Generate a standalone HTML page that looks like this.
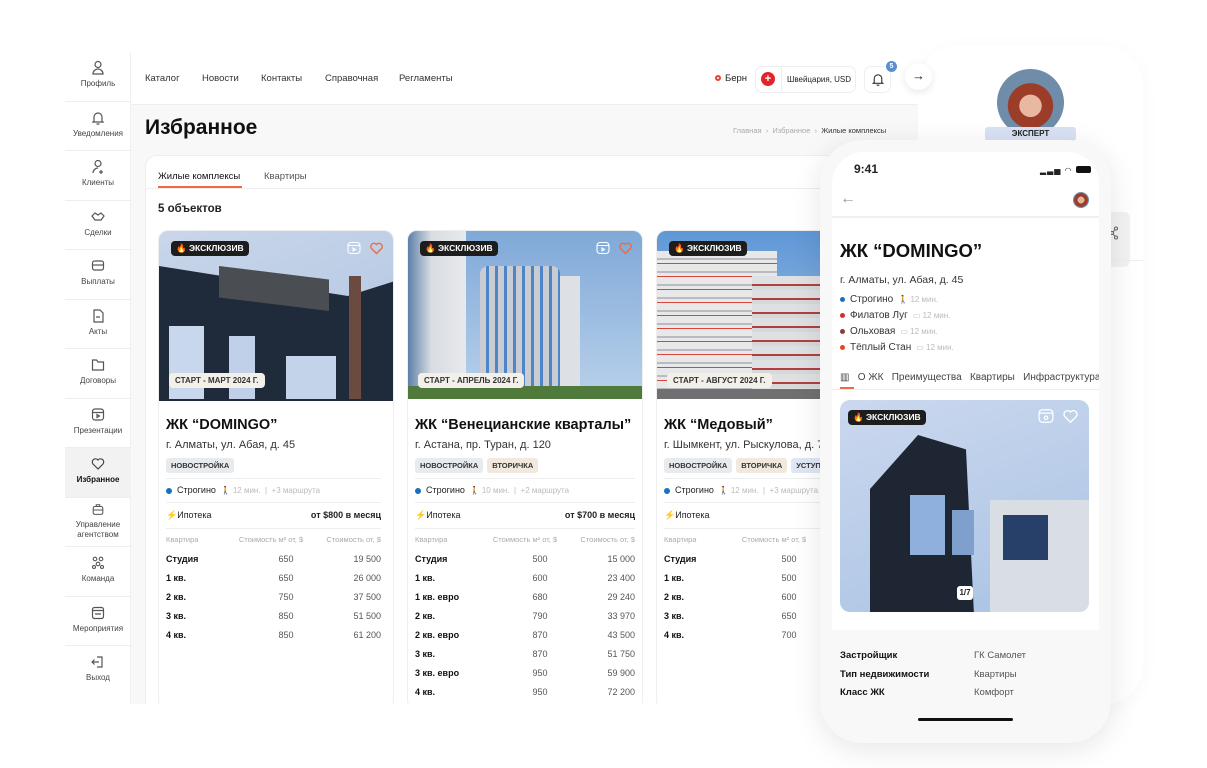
<!DOCTYPE html>
<html><head><meta charset="utf-8"><style>
*{margin:0;padding:0;box-sizing:border-box}
body{width:1207px;height:768px;background:#fff;font-family:"Liberation Sans",sans-serif;color:#222;position:relative;overflow:hidden}
.a{position:absolute}
.sb{left:65px;width:66px;text-align:center;font-size:8px;color:#444;border-bottom:1px solid #eee;height:49.5px}
.sb svg{display:block;margin:0 auto 3px;}
.nav{font-size:9.5px;color:#333}
.card{background:#fff;border:1px solid #eee;border-radius:10px;overflow:hidden}
.img{position:absolute;left:0;top:0;right:0;height:168px}
.badge{position:absolute;left:12px;top:10px;background:#1d1d1d;color:#fff;font-size:8.5px;font-weight:bold;padding:2px 5px;border-radius:4px}
.start{position:absolute;left:10px;top:142px;background:#f3efe9;color:#333;font-size:8px;font-weight:bold;padding:3px 6px;border-radius:4px}
.t{font-size:14.5px;font-weight:bold;color:#111;white-space:nowrap}
.ad{font-size:11px;color:#333}
.tag{display:inline-block;font-size:7.5px;font-weight:bold;background:#e8ebee;padding:3px 5px;border-radius:3px;margin-right:4px;color:#333}
.hr{height:1px;background:#eee}
.row{display:flex;font-size:9px;height:19px;align-items:center}
.row span:first-child{flex:1;font-weight:bold;color:#111}
.row span:nth-child(2){width:70px;text-align:center;color:#555}
.row span:nth-child(3){width:60px;text-align:right;color:#555}
.hd span{font-weight:normal!important;color:#aaa!important;font-size:7.5px}
.dot{display:inline-block;width:6px;height:6px;border-radius:50%;margin-right:5px;vertical-align:middle}
</style></head><body>

<!-- right panel (behind) -->
<div class="a" style="left:918px;top:45px;width:225px;height:660px;background:#fff;border-radius:40px;box-shadow:0 4px 20px rgba(0,0,0,.03)"></div>
<div class="a" style="left:1100px;top:212px;width:30px;height:55px;background:#f2f2f2;border-radius:6px"></div>
<svg class="a" style="left:1109px;top:226px" width="10" height="14" viewBox="0 0 10 14" fill="none" stroke="#666" stroke-width="1"><circle cx="7" cy="2.5" r="1.5"/><circle cx="3" cy="7" r="1.5"/><circle cx="7" cy="11.5" r="1.5"/><path d="M4.2 6l1.8-2.5 M4.2 8l1.8 2.5"/></svg>
<div class="a" style="left:1100px;top:260px;width:43px;height:1px;background:#eee"></div>
<div class="a" style="left:997px;top:69px;width:67px;height:67px;border-radius:50%;background:radial-gradient(circle at 50% 55%,#e8b8a0 0 22%,#9c3d2a 23% 45%,#6f8ca8 46%)"></div>
<div class="a" style="left:985px;top:127px;width:91px;height:14px;background:#d8e2f4;border-radius:3px;font-size:8px;text-align:center;font-weight:bold;line-height:13px;color:#222">ЭКСПЕРТ</div>

<!-- sidebar -->
<div class="a" style="left:65px;top:52px;width:66px;height:652px;background:#fff;border-right:1px solid #f0f0f0"></div>
<div class="a sb" style="top:52px"><svg width="14" height="16" viewBox="0 0 14 16" fill="none" stroke="#555" stroke-width="1.2" style="margin-top:8px"><circle cx="7" cy="4.5" r="3"/><path d="M2 14c0-3 2.5-5 5-5s5 2 5 5z"/></svg>Профиль</div>
<div class="a sb" style="top:101.5px"><svg width="14" height="16" viewBox="0 0 14 16" fill="none" stroke="#555" stroke-width="1.2" style="margin-top:8px"><path d="M3 11V7a4 4 0 018 0v4l1 1H2z M5.5 14h3"/></svg>Уведомления</div>
<div class="a sb" style="top:151px"><svg width="14" height="16" viewBox="0 0 14 16" fill="none" stroke="#555" stroke-width="1.2" style="margin-top:8px"><circle cx="7" cy="4.5" r="3"/><path d="M2 14c0-3 2.5-5 5-5 M10 11v4 M8 13h4"/></svg>Клиенты</div>
<div class="a sb" style="top:200.5px"><svg width="14" height="16" viewBox="0 0 14 16" fill="none" stroke="#555" stroke-width="1.2" style="margin-top:8px"><path d="M1 7l3-3 3 2 3-2 3 3-3 4H4z"/></svg>Сделки</div>
<div class="a sb" style="top:250px"><svg width="14" height="16" viewBox="0 0 14 16" fill="none" stroke="#555" stroke-width="1.2" style="margin-top:8px"><rect x="1.5" y="3" width="11" height="9" rx="2"/><path d="M1.5 7h11"/></svg>Выплаты</div>
<div class="a sb" style="top:299.5px"><svg width="14" height="16" viewBox="0 0 14 16" fill="none" stroke="#555" stroke-width="1.2" style="margin-top:8px"><path d="M3 2h6l3 3v9H3z M5 9h4"/></svg>Акты</div>
<div class="a sb" style="top:349px"><svg width="14" height="16" viewBox="0 0 14 16" fill="none" stroke="#555" stroke-width="1.2" style="margin-top:8px"><path d="M1.5 3h4l1.5 2h5.5v8h-11z"/></svg>Договоры</div>
<div class="a sb" style="top:398.5px"><svg width="14" height="16" viewBox="0 0 14 16" fill="none" stroke="#555" stroke-width="1.2" style="margin-top:8px"><rect x="1.5" y="2" width="11" height="11" rx="2.5"/><path d="M1.5 5.5h11 M6 7.5v3l2.5-1.5z"/></svg>Презентации</div>
<div class="a sb" style="top:448px;background:#f2f2f2;color:#111;font-weight:bold"><svg width="14" height="16" viewBox="0 0 14 16" fill="none" stroke="#444" stroke-width="1.2" style="margin-top:8px"><path d="M7 13L2 8a3 3 0 015-4 3 3 0 015 4z"/></svg>Избранное</div>
<div class="a sb" style="top:497.5px;line-height:10px"><svg width="14" height="14" viewBox="0 0 14 16" fill="none" stroke="#555" stroke-width="1.2" style="margin-top:5px"><rect x="1.5" y="4" width="11" height="9" rx="2"/><path d="M5 4V2h4v2 M1.5 8h11"/></svg>Управление агентством</div>
<div class="a sb" style="top:547px"><svg width="14" height="16" viewBox="0 0 14 16" fill="none" stroke="#555" stroke-width="1.1" style="margin-top:8px"><circle cx="4" cy="4" r="1.8"/><circle cx="10" cy="4" r="1.8"/><circle cx="7" cy="9" r="1.8"/><circle cx="3" cy="12" r="1.5"/><circle cx="11" cy="12" r="1.5"/></svg>Команда</div>
<div class="a sb" style="top:596.5px"><svg width="14" height="16" viewBox="0 0 14 16" fill="none" stroke="#555" stroke-width="1.2" style="margin-top:8px"><rect x="1.5" y="2.5" width="11" height="11" rx="2"/><path d="M1.5 5.5h11 M4 9h6"/></svg>Мероприятия</div>
<div class="a sb" style="top:646px;border:none"><svg width="14" height="16" viewBox="0 0 14 16" fill="none" stroke="#555" stroke-width="1.2" style="margin-top:8px"><path d="M6 3h5v10H6 M1 8h7 M3.5 5.5L1 8l2.5 2.5"/></svg>Выход</div>

<!-- main bg -->
<div class="a" style="left:131px;top:105px;width:787px;height:600px;background:#f8f8f8"></div>
<div class="a" style="left:131px;top:52px;width:787px;height:53px;background:#fff;border-bottom:1px solid #eee"></div>
<div class="a nav" style="left:145px;top:73px">Каталог</div>
<div class="a nav" style="left:202px;top:73px">Новости</div>
<div class="a nav" style="left:261px;top:73px">Контакты</div>
<div class="a nav" style="left:325px;top:73px">Справочная</div>
<div class="a nav" style="left:399px;top:73px">Регламенты</div>
<div class="a" style="left:715px;top:75px;width:6px;height:6px;border-radius:50%;border:2px solid #e8452c"></div>
<div class="a" style="left:725px;top:73px;font-size:9.5px">Берн</div>
<div class="a" style="left:755px;top:66px;width:101px;height:27px;border:1px solid #eee;border-radius:7px"></div>
<div class="a" style="left:781px;top:66px;width:1px;height:27px;background:#eee"></div>
<div class="a" style="left:761px;top:72px;width:14px;height:14px;border-radius:50%;background:#e2242b;color:#fff;font-size:11px;font-weight:bold;line-height:14px;text-align:center">+</div>
<div class="a" style="left:787px;top:75px;font-size:8px">Швейцария, USD</div>
<div class="a" style="left:864px;top:66px;width:27px;height:27px;border:1px solid #eee;border-radius:7px"></div>
<svg class="a" style="left:871px;top:72px" width="14" height="15" viewBox="0 0 14 16" fill="none" stroke="#333" stroke-width="1.2"><path d="M3 11V7a4 4 0 018 0v4l1 1H2z M5.5 14h3"/></svg>
<div class="a" style="left:886px;top:61px;width:11px;height:11px;border-radius:50%;background:#5b8fd0;color:#fff;font-size:7px;line-height:11px;text-align:center;font-weight:bold">5</div>
<div class="a" style="left:905px;top:63px;width:27px;height:27px;border-radius:50%;background:#fff;box-shadow:0 2px 8px rgba(0,0,0,.1);text-align:center;line-height:26px;font-size:13px">→</div>

<div class="a" style="left:145px;top:116px;font-size:21px;font-weight:bold;color:#111">Избранное</div>
<div class="a" style="left:733px;top:126px;font-size:7.5px;color:#aaa">Главная &nbsp;›&nbsp; Избранное &nbsp;›&nbsp; <span style="color:#333">Жилые комплексы</span></div>

<div class="a" style="left:145px;top:155px;width:773px;height:550px;background:#fff;border-radius:12px 0 0 0;border:1px solid #eee"></div>
<div class="a" style="left:158px;top:171px;font-size:9.5px;color:#111">Жилые комплексы</div>
<div class="a" style="left:158px;top:186px;width:84px;height:2px;background:#ee6a45"></div>
<div class="a" style="left:264px;top:171px;font-size:9.5px;color:#555">Квартиры</div>
<div class="a" style="left:146px;top:188px;width:772px;height:1px;background:#eee"></div>
<div class="a" style="left:158px;top:203px;font-size:11.5px;font-weight:bold">5 объектов</div>

<!-- card 1 -->
<div class="a card" style="left:158px;top:230px;width:236px;height:480px">
 <div class="img" style="background:linear-gradient(160deg,#c9d6ea,#aec4e0)">
  <div class="a" style="left:0;top:20px;width:236px;height:150px;background:#1f2a3a;clip-path:polygon(0 10%,80% 30%,100% 20%,100% 100%,0 100%)"></div>
  <div class="a" style="left:60px;top:35px;width:110px;height:45px;background:#4a4e52;clip-path:polygon(0 0,100% 30%,100% 100%,0 70%)"></div>
  <div class="a" style="left:10px;top:95px;width:35px;height:73px;background:#c9d7ec"></div>
  <div class="a" style="left:70px;top:105px;width:26px;height:63px;background:#c0d0e8"></div>
  <div class="a" style="left:127px;top:125px;width:50px;height:43px;background:#c3d3ea"></div>
  <div class="a" style="left:190px;top:45px;width:12px;height:123px;background:#6b4a3f"></div>
 </div>
 <div class="badge">🔥 ЭКСКЛЮЗИВ</div>
 <svg class="a" style="left:188px;top:10px" width="14" height="14" viewBox="0 0 14 14" fill="none" stroke="#fff" stroke-width="1.1"><rect x="1" y="1.5" width="12" height="11" rx="3"/><path d="M1 4.5h12 M6 7v3l2.5-1.5z"/></svg>
 <svg class="a" style="left:210px;top:10px" width="15" height="14" viewBox="0 0 14 14" fill="none" stroke="#ee6a45" stroke-width="1.4"><path d="M7 12.5L2 7.5a3 3 0 015-4 3 3 0 015 4z"/></svg>
 <div class="start">СТАРТ - МАРТ 2024 Г.</div>
 <div class="a" style="left:7px;top:186px;right:12px">
  <div class="t">ЖК “DOMINGO”</div>
  <div class="ad" style="margin-top:6px">г. Алматы, ул. Абая, д. 45</div>
  <div style="margin-top:4px"><span class="tag">НОВОСТРОЙКА</span></div>
  <div class="hr" style="margin-top:5px"></div>
  <div style="font-size:9px;height:23px;line-height:23px"><span class="dot" style="background:#1a6fc0"></span>Строгино <span style="color:#bbb;font-size:8px">&nbsp;🚶 12 мин. &nbsp;|&nbsp; +3 маршрута</span></div>
  <div class="hr"></div>
  <div style="font-size:9px;height:25px;line-height:25px;display:flex;justify-content:space-between"><span><span style="color:#f5a623">⚡</span>Ипотека</span><b style="font-weight:bold">от $800 в месяц</b></div>
  <div class="hr"></div>
  <div class="row hd" style="margin-top:1px"><span>Квартира</span><span style="width:80px">Стоимость м² от, $</span><span style="width:70px">Стоимость от, $</span></div>
  <div class="row"><span>Студия</span><span>650</span><span>19 500</span></div>
  <div class="row"><span>1 кв.</span><span>650</span><span>26 000</span></div>
  <div class="row"><span>2 кв.</span><span>750</span><span>37 500</span></div>
  <div class="row"><span>3 кв.</span><span>850</span><span>51 500</span></div>
  <div class="row"><span>4 кв.</span><span>850</span><span>61 200</span></div>
 </div>
</div>

<!-- card 2 -->
<div class="a card" style="left:407px;top:230px;width:236px;height:480px">
 <div class="img" style="background:linear-gradient(180deg,#7fa9d8,#b9d1ea)">
  <div class="a" style="left:0;top:0;width:58px;height:168px;background:linear-gradient(90deg,#5d7fa8,#d8dde3 40%,#e7e9ec)"></div>
  <div class="a" style="left:72px;top:35px;width:80px;height:133px;background:repeating-linear-gradient(90deg,#c9ccd2 0 6px,#4d86c6 6px 9px);border-radius:8px 8px 0 0"></div>
  <div class="a" style="left:152px;top:45px;width:20px;height:123px;background:#dde1e6"></div>
  <div class="a" style="left:0;top:155px;width:236px;height:13px;background:#4f7a3c"></div>
 </div>
 <div class="badge">🔥 ЭКСКЛЮЗИВ</div>
 <svg class="a" style="left:188px;top:10px" width="14" height="14" viewBox="0 0 14 14" fill="none" stroke="#fff" stroke-width="1.1"><rect x="1" y="1.5" width="12" height="11" rx="3"/><path d="M1 4.5h12 M6 7v3l2.5-1.5z"/></svg>
 <svg class="a" style="left:210px;top:10px" width="15" height="14" viewBox="0 0 14 14" fill="none" stroke="#ee6a45" stroke-width="1.4"><path d="M7 12.5L2 7.5a3 3 0 015-4 3 3 0 015 4z"/></svg>
 <div class="start">СТАРТ - АПРЕЛЬ 2024 Г.</div>
 <div class="a" style="left:7px;top:186px;right:7px">
  <div class="t">ЖК “Венецианские кварталы”</div>
  <div class="ad" style="margin-top:6px">г. Астана, пр. Туран, д. 120</div>
  <div style="margin-top:4px"><span class="tag">НОВОСТРОЙКА</span><span class="tag" style="background:#f1e8de">ВТОРИЧКА</span></div>
  <div class="hr" style="margin-top:5px"></div>
  <div style="font-size:9px;height:23px;line-height:23px"><span class="dot" style="background:#1a6fc0"></span>Строгино <span style="color:#bbb;font-size:8px">&nbsp;🚶 10 мин. &nbsp;|&nbsp; +2 маршрута</span></div>
  <div class="hr"></div>
  <div style="font-size:9px;height:25px;line-height:25px;display:flex;justify-content:space-between"><span><span style="color:#f5a623">⚡</span>Ипотека</span><b>от $700 в месяц</b></div>
  <div class="hr"></div>
  <div class="row hd" style="margin-top:1px"><span>Квартира</span><span style="width:80px">Стоимость м² от, $</span><span style="width:70px">Стоимость от, $</span></div>
  <div class="row"><span>Студия</span><span>500</span><span>15 000</span></div>
  <div class="row"><span>1 кв.</span><span>600</span><span>23 400</span></div>
  <div class="row"><span>1 кв. евро</span><span>680</span><span>29 240</span></div>
  <div class="row"><span>2 кв.</span><span>790</span><span>33 970</span></div>
  <div class="row"><span>2 кв. евро</span><span>870</span><span>43 500</span></div>
  <div class="row"><span>3 кв.</span><span>870</span><span>51 750</span></div>
  <div class="row"><span>3 кв. евро</span><span>950</span><span>59 900</span></div>
  <div class="row"><span>4 кв.</span><span>950</span><span>72 200</span></div>
 </div>
</div>

<!-- card 3 -->
<div class="a card" style="left:656px;top:230px;width:236px;height:480px">
 <div class="img" style="background:linear-gradient(180deg,#5f97d6,#a9c9ea)">
  <div class="a" style="left:0;top:20px;width:120px;height:148px;background:repeating-linear-gradient(180deg,#e8e8e8 0 7px,#b8bcc2 7px 9px,#e8e8e8 9px 12px,#d8453d 12px 13px)"></div>
  <div class="a" style="left:95px;top:45px;width:70px;height:123px;background:repeating-linear-gradient(180deg,#dfe0e2 0 8px,#b04040 8px 10px,#d6d8da 10px 14px)"></div>
  <div class="a" style="left:0;top:158px;width:236px;height:10px;background:#707070"></div>
 </div>
 <div class="badge">🔥 ЭКСКЛЮЗИВ</div>
 <div class="start">СТАРТ - АВГУСТ 2024 Г.</div>
 <div class="a" style="left:7px;top:186px;right:7px">
  <div class="t">ЖК “Медовый”</div>
  <div class="ad" style="margin-top:6px;white-space:nowrap">г. Шымкент, ул. Рыскулова, д. 78</div>
  <div style="margin-top:4px;white-space:nowrap"><span class="tag">НОВОСТРОЙКА</span><span class="tag" style="background:#f1e8de">ВТОРИЧКА</span><span class="tag" style="background:#dfe6f6">УСТУПКА</span></div>
  <div class="hr" style="margin-top:5px"></div>
  <div style="font-size:9px;height:23px;line-height:23px;white-space:nowrap"><span class="dot" style="background:#1a6fc0"></span>Строгино <span style="color:#bbb;font-size:8px">&nbsp;🚶 12 мин. &nbsp;|&nbsp; +3 маршрута</span></div>
  <div class="hr"></div>
  <div style="font-size:9px;height:25px;line-height:25px"><span style="color:#f5a623">⚡</span>Ипотека</div>
  <div class="hr"></div>
  <div class="row hd" style="margin-top:1px"><span>Квартира</span><span style="width:80px">Стоимость м² от, $</span><span style="width:70px">Стоимость от, $</span></div>
  <div class="row"><span>Студия</span><span>500</span><span></span></div>
  <div class="row"><span>1 кв.</span><span>500</span><span></span></div>
  <div class="row"><span>2 кв.</span><span>600</span><span></span></div>
  <div class="row"><span>3 кв.</span><span>650</span><span></span></div>
  <div class="row"><span>4 кв.</span><span>700</span><span></span></div>
 </div>
</div>

<!-- white cover bottom -->
<div class="a" style="left:131px;top:704px;width:800px;height:64px;background:#fff"></div>

<!-- phone -->
<div class="a" style="left:820px;top:140px;width:291px;height:603px;background:#f8f8f8;border-radius:42px;box-shadow:0 6px 30px rgba(0,0,0,.1)"></div>
<div class="a" style="left:832px;top:152px;width:267px;height:579px;background:#fff;border-radius:32px;overflow:hidden">
 <div class="a" style="left:22px;top:10px;font-size:12px;font-weight:bold">9:41</div>
 <div class="a" style="left:208px;top:14px;font-size:8px;letter-spacing:1px">▂▃▅ ◠ <span style="display:inline-block;width:15px;height:7px;background:#111;border-radius:2px"></span></div>
 <div class="a" style="left:8px;top:38px;font-size:16px;color:#999">←</div>
 <div class="a" style="left:241px;top:40px;width:16px;height:16px;border-radius:50%;background:radial-gradient(circle,#e1b59e 0 30%,#9c3d2a 31% 60%,#6f8ca8 61%)"></div>
 <div class="a" style="left:0;top:64px;width:267px;height:2px;background:#f0f0f0"></div>
 <div class="a" style="left:8px;top:88px;font-size:18.5px;font-weight:bold;color:#111">ЖК “DOMINGO”</div>
 <div class="a" style="left:8px;top:122px;font-size:10.5px;color:#333">г. Алматы, ул. Абая, д. 45</div>
 <div class="a" style="left:8px;top:140px;font-size:10px;line-height:16px;color:#333">
  <div><span class="dot" style="background:#1a6fc0;width:5px;height:5px"></span>Строгино <span style="color:#bbb;font-size:8px">&nbsp;🚶 12 мин.</span></div>
  <div><span class="dot" style="background:#d62d2d;width:5px;height:5px"></span>Филатов Луг <span style="color:#bbb;font-size:8px">&nbsp;▭ 12 мин.</span></div>
  <div><span class="dot" style="background:#8a3d3d;width:5px;height:5px"></span>Ольховая <span style="color:#bbb;font-size:8px">&nbsp;▭ 12 мин.</span></div>
  <div><span class="dot" style="background:#e8452c;width:5px;height:5px"></span>Тёплый Стан <span style="color:#bbb;font-size:8px">&nbsp;▭ 12 мин.</span></div>
 </div>
 <div class="a" style="left:8px;top:220px;font-size:10px;color:#444;white-space:nowrap">▥ &nbsp;&nbsp;О ЖК &nbsp;&nbsp;Преимущества &nbsp;&nbsp;Квартиры &nbsp;&nbsp;Инфраструктура</div>
 <div class="a" style="left:8px;top:235px;width:14px;height:2px;background:#ee6a45"></div>
 <div class="a" style="left:0;top:237px;width:267px;height:1px;background:#eee"></div>
 <div class="a" style="left:8px;top:248px;width:249px;height:212px;border-radius:10px;overflow:hidden;background:linear-gradient(160deg,#cbd8ee,#a9c3e4)">
  <div class="a" style="left:30px;top:35px;width:160px;height:180px;background:#1e2634;clip-path:polygon(30% 0,60% 8%,65% 100%,0 100%,0 30%)"></div>
  <div class="a" style="left:150px;top:100px;width:100px;height:112px;background:#d9dde4"></div>
  <div class="a" style="left:163px;top:115px;width:45px;height:45px;background:#27406a"></div>
  <div class="a" style="left:70px;top:95px;width:35px;height:60px;background:#8fb0dc"></div>
  <div class="a" style="left:112px;top:110px;width:22px;height:45px;background:#7fa0cc"></div>
  <div class="a" style="left:117px;top:186px;width:16px;height:14px;background:#fff;border-radius:3px;font-size:8px;font-weight:bold;text-align:center;line-height:14px">1/7</div>
 </div>
 <div class="a" style="left:16px;top:258px;background:#1d1d1d;color:#fff;font-size:8.5px;font-weight:bold;padding:2px 5px;border-radius:4px">🔥 ЭКСКЛЮЗИВ</div>
 <svg class="a" style="left:206px;top:256px" width="16" height="16" viewBox="0 0 14 14" fill="none" stroke="#fff" stroke-width="1.1"><rect x="1" y="1.5" width="12" height="11" rx="3"/><path d="M1 4.5h12"/><circle cx="7" cy="8.5" r="1.5"/></svg>
 <svg class="a" style="left:230px;top:256px" width="17" height="16" viewBox="0 0 14 14" fill="none" stroke="#fff" stroke-width="1.2"><path d="M7 12.5L2 7.5a3 3 0 015-4 3 3 0 015 4z"/></svg>
 <div class="a" style="left:0;top:478px;width:267px;height:101px;background:#f8f8f8"></div>
 <div class="a" style="left:8px;top:495px;font-size:9.5px;font-weight:bold;line-height:18.5px;color:#111">Застройщик<br>Тип недвижимости<br>Класс ЖК</div>
 <div class="a" style="left:142px;top:495px;font-size:9.5px;line-height:18.5px;color:#555">ГК Самолет<br>Квартиры<br>Комфорт</div>
 <div class="a" style="left:86px;top:566px;width:95px;height:3px;background:#111;border-radius:2px"></div>
</div>
</body></html>
